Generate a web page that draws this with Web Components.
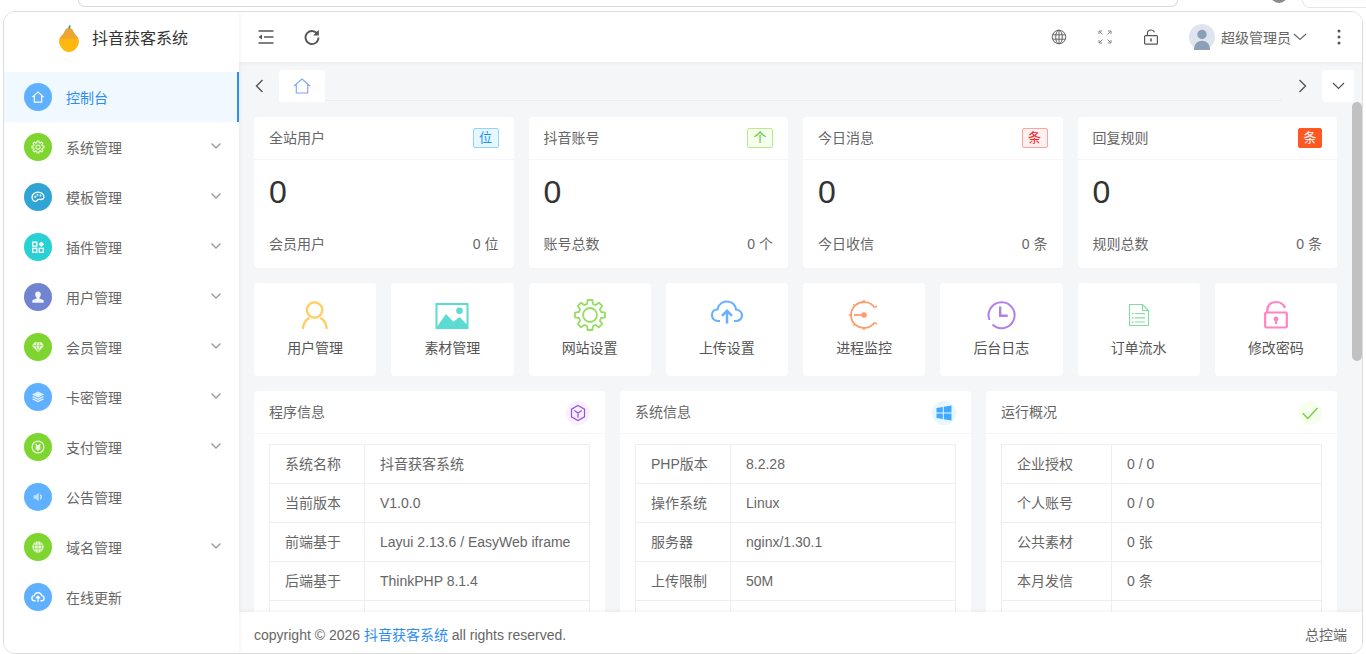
<!DOCTYPE html>
<html lang="zh-CN">
<head>
<meta charset="utf-8">
<title>抖音获客系统</title>
<style>
  html, body { margin: 0; height: 100%; overflow: hidden; background: #fff; }
  body { font: 14px "Liberation Sans", "Noto Sans CJK SC", sans-serif; color: #666; }
</style>
</head>
<body>
<app-shell>
  <side-menu slot="side">
    <menu-item icon="home" tint="#5fb1ff" active>控制台</menu-item>
    <menu-item icon="gear" tint="#7ed52f" more>系统管理</menu-item>
    <menu-item icon="palette" tint="#31a4d6" more>模板管理</menu-item>
    <menu-item icon="apps" tint="#29d0d4" more>插件管理</menu-item>
    <menu-item icon="person" tint="#7084d2" more>用户管理</menu-item>
    <menu-item icon="gem" tint="#7ed52f" more>会员管理</menu-item>
    <menu-item icon="layers" tint="#5fb1ff" more>卡密管理</menu-item>
    <menu-item icon="yen" tint="#7ed52f" more>支付管理</menu-item>
    <menu-item icon="speaker" tint="#5fb1ff">公告管理</menu-item>
    <menu-item icon="globefill" tint="#7ed52f" more>域名管理</menu-item>
    <menu-item icon="cloudsmall" tint="#5fb1ff">在线更新</menu-item>
  </side-menu>
  <top-bar slot="top"></top-bar>
  <tab-bar slot="tabs"></tab-bar>
  <dash-content slot="content">
    <stat-card slot="stats" title="全站用户" tag="位" kind="blue" sub="会员用户" total="0 位"></stat-card>
    <stat-card slot="stats" title="抖音账号" tag="个" kind="green" sub="账号总数" total="0 个"></stat-card>
    <stat-card slot="stats" title="今日消息" tag="条" kind="red" sub="今日收信" total="0 条"></stat-card>
    <stat-card slot="stats" title="回复规则" tag="条" kind="orange" sub="规则总数" total="0 条"></stat-card>

    <quick-tile slot="tiles" icon="q-user">用户管理</quick-tile>
    <quick-tile slot="tiles" icon="q-image">素材管理</quick-tile>
    <quick-tile slot="tiles" icon="q-gear">网站设置</quick-tile>
    <quick-tile slot="tiles" icon="q-cloud">上传设置</quick-tile>
    <quick-tile slot="tiles" icon="q-process">进程监控</quick-tile>
    <quick-tile slot="tiles" icon="q-clock">后台日志</quick-tile>
    <quick-tile slot="tiles" icon="q-doc">订单流水</quick-tile>
    <quick-tile slot="tiles" icon="q-lock">修改密码</quick-tile>

    <info-panel slot="panels" title="程序信息" icon="p-cube" tint="#f9f0ff" col="95px">
      <info-row label="系统名称">抖音获客系统</info-row>
      <info-row label="当前版本">V1.0.0</info-row>
      <info-row label="前端基于">Layui 2.13.6 / EasyWeb iframe</info-row>
      <info-row label="后端基于">ThinkPHP 8.1.4</info-row>
      <info-row label="">&nbsp;</info-row>
    </info-panel>
    <info-panel slot="panels" title="系统信息" icon="p-win" tint="#e6f7ff" col="95px">
      <info-row label="PHP版本">8.2.28</info-row>
      <info-row label="操作系统">Linux</info-row>
      <info-row label="服务器">nginx/1.30.1</info-row>
      <info-row label="上传限制">50M</info-row>
      <info-row label="">&nbsp;</info-row>
    </info-panel>
    <info-panel slot="panels" title="运行概况" icon="p-check" tint="#f6ffed" col="110px">
      <info-row label="企业授权">0 / 0</info-row>
      <info-row label="个人账号">0 / 0</info-row>
      <info-row label="公共素材">0 张</info-row>
      <info-row label="本月发信">0 条</info-row>
      <info-row label="">&nbsp;</info-row>
    </info-panel>
  </dash-content>
  <page-footer slot="foot"></page-footer>
</app-shell>

<script>
// gear outline, used big and small
function gearPath(cx, cy, ro, ri, teeth) {
  var d = "", step = Math.PI * 2 / teeth;
  for (var i = 0; i < teeth; i++) {
    var a = i * step - Math.PI / 2;
    var pts = [[ri, a - step * 0.34], [ro, a - step * 0.2], [ro, a + step * 0.2], [ri, a + step * 0.34]];
    pts.forEach(function (p, j) {
      var x = (cx + p[0] * Math.cos(p[1])).toFixed(2), y = (cy + p[0] * Math.sin(p[1])).toFixed(2);
      d += (i === 0 && j === 0 ? "M" : "L") + x + " " + y + " ";
    });
  }
  return d + "Z";
}

var ICONS = {
  // small white ones in the side menu
  home: [16, 16, '<path d="M1.500 8.200 8 2.400l6.500 5.800M3.800 6.800v7h8.400v-7" fill="none" stroke="#fff" stroke-width="1.300"/>'],
  gear: [16, 16, '<path d="' + gearPath(8, 8, 7, 5, 8) + '" fill="none" stroke="#fff" stroke-opacity=".85" stroke-width="1.300" stroke-linejoin="round"/><circle cx="8" cy="8" r="2.400" fill="none" stroke="#fff" stroke-opacity=".85" stroke-width="1.200"/>'],
  palette: [16, 16, '<path d="M8 2.500C4 2.500 1.200 5.200 1.200 8.400c0 2.600 2 4.600 4 4.600 1.600 0 1.600-1.400 2.600-2 1.200-.7 3 .2 4.800-.3 1.400-.4 2.200-1.400 2.200-2.700 0-3-3.200-5.500-6.800-5.500z" fill="none" stroke="#fff" stroke-width="1.500"/><circle cx="5" cy="7.800" r="1.200" fill="#fff"/><circle cx="7.400" cy="5.400" r="1.100" fill="#fff"/><circle cx="10.800" cy="6.200" r="1.100" fill="#fff"/>'],
  apps: [16, 16, '<g fill="none" stroke="#fff" stroke-width="1.500"><rect x="2" y="2.500" width="4.600" height="4.600"/><rect x="2" y="9.500" width="4.600" height="4.600"/><rect x="9.400" y="9.500" width="4.600" height="4.600"/></g><path d="M11.800 1.600 15 4.800l-3.200 3.200-3.200-3.200z" fill="#fff"/>'],
  person: [16, 16, '<path d="M8 1.800c-2 0-3.200 1.500-3.200 3.400 0 1.400.6 2.500 1.500 3.300v1.200C4.700 10.400 1.500 11 1.500 12.400V14.500h13v-2.100c0-1.400-3.200-2-4.800-2.700V8.500c.9-.8 1.500-1.900 1.500-3.300C11.200 3.300 10 1.800 8 1.800z" fill="#fff" fill-opacity=".92"/>'],
  gem: [16, 16, '<path d="M4 2.500h8l3 4-7 7.500-7-7.500z" fill="#fff" fill-opacity=".85"/><path d="M1.500 6.500h13M5.500 6.500 8 13l2.500-6.500M5.500 6.500 6.800 3M10.500 6.500 9.200 3" fill="none" stroke="#7ed52f" stroke-width=".8"/>'],
  layers: [16, 16, '<g fill="#fff" fill-opacity=".8"><path d="M8 1.800 15 5.200 8 8.600 1 5.200z"/><path d="M2.800 7 8 9.600 13.200 7 15 7.900 8 11.300 1 7.900z"/><path d="M2.800 9.800 8 12.300 13.200 9.800 15 10.700 8 14.100 1 10.700z"/></g>'],
  yen: [16, 16, '<circle cx="8" cy="8" r="6.800" fill="none" stroke="#fff" stroke-opacity=".85" stroke-width="1.400"/><path d="M5.400 4.600 8 8l2.600-3.400M5.200 8.200h5.600M5.200 10.200h5.600M8 8v4.200" fill="none" stroke="#fff" stroke-width="1.500"/>'],
  speaker: [16, 16, '<path d="M3 6h2.400l3.400-3v10L5.400 10H3z" fill="#fff" fill-opacity=".6"/><path d="M10.600 5.500c1.300 1.400 1.300 3.600 0 5" fill="none" stroke="#fff" stroke-opacity=".75" stroke-width="1.500"/>'],
  globefill: [16, 16, '<circle cx="8" cy="8" r="6.500" fill="#fff" fill-opacity=".85"/><path d="M2 6h12M2 10h12M8 1.700v12.600M5.200 2.600c-1.600 3.400-1.600 7.400 0 10.800M10.800 2.600c1.600 3.400 1.600 7.400 0 10.800" fill="none" stroke="#7ed52f" stroke-width=".7"/>'],
  cloudsmall: [16, 16, '<path d="M5.200 12.300H4.300C2.400 12.300 1 11 1 9.300 1 7.700 2.300 6.500 3.800 6.400 4.200 4.300 6 2.900 8 2.900s3.800 1.400 4.200 3.500c1.500.1 2.800 1.300 2.800 2.900 0 1.700-1.400 3-3.300 3h-.9" fill="none" stroke="#fff" stroke-width="1.500"/><path d="M8 13.800V7.400M5.600 9.600 8 7.200l2.400 2.400" fill="none" stroke="#fff" stroke-width="1.500"/>'],

  // quick tiles
  "q-user": [36, 32, '<circle cx="17.600" cy="11" r="7.700" fill="none" stroke="#ffcf66" stroke-width="2.400"/><path d="M6 29c.5-4.600 2.800-8 5.600-9.600M24 19.400c2.800 1.600 5.100 5 5.600 9.600" fill="none" stroke="#ffcf66" stroke-width="2.400" stroke-linecap="round"/>'],
  "q-image": [36, 32, '<rect x="2.500" y="5" width="31" height="24" fill="#fff" stroke="#5cdbd3" stroke-width="2"/><path d="M2.500 28.500 12 15l7.500 7.700 6-4.700 8 8V30h-31z" fill="#5cdbd3"/><circle cx="25.500" cy="11.700" r="3.300" fill="#5cdbd3"/>'],
  "q-gear": [36, 32, '<path d="' + gearPath(18, 16, 15.200, 11.400, 8) + '" fill="none" stroke="#95de64" stroke-width="1.800" stroke-linejoin="round"/><circle cx="18" cy="16" r="7" fill="none" stroke="#95de64" stroke-width="1.800"/>'],
  "q-cloud": [36, 32, '<path d="M11 22H9c-4 0-6-3-6-6s2-5.500 5.500-5.500C9.500 5.500 13.500 2.500 18 2.500c5 0 8.500 3.500 9 8 3.500.5 6 3 6 6s-2.500 5.500-6 5.500h-2" fill="none" stroke="#69b1ff" stroke-width="2.200"/><path d="M18 24.500V12M13 16.800l5-5 5 5" fill="none" stroke="#69b1ff" stroke-width="2.500"/>'],
  "q-process": [36, 32, '<g fill="none" stroke="#ff9c6e"><path d="M28.600 8.500A13 13 0 1 0 28.600 23.500" stroke-width="1.800"/><path d="M28.600 8.500 31 6.800M28.600 23.500 31 25.200M18 3V.8M18 29v2.200M8.800 6.800 7.300 5.300M8.800 25.200 7.300 26.700M5 16H2.800" stroke-width="1.500"/><path d="M8 16h9" stroke-width="1.800"/></g><circle cx="18" cy="16" r="2.800" fill="#ff9c6e"/>'],
  "q-clock": [36, 32, '<path d="M9.500 25.500A13 13 0 1 0 6.500 21" fill="none" stroke="#b37feb" stroke-width="2"/><path d="M17.200 7.500v9.300h7.500" fill="none" stroke="#b37feb" stroke-width="2.400"/>'],
  "q-doc": [36, 32, '<g fill="none" stroke="#86dba4" stroke-width="1.200"><path d="M8.500 5.500h13l6 6v15h-19z"/><path d="M21.500 5.500v6h6"/><path d="M14 14.500h10M14 18.800h10M14 23h10"/></g><g fill="#86dba4"><rect x="11" y="13.800" width="1.500" height="1.500"/><rect x="11" y="18" width="1.500" height="1.500"/><rect x="11" y="22.300" width="1.500" height="1.500"/></g>'],
  "q-lock": [36, 32, '<g fill="none" stroke="#ff85c0" stroke-width="2.200"><rect x="7.200" y="13.500" width="21.600" height="15" rx="1"/><path d="M9.200 13V11.500C9.200 6 13 3 18 3c4 0 7.500 2 9 6"/></g><circle cx="18" cy="20" r="2.400" fill="#ff85c0"/><path d="M17 20h2v5h-2z" fill="#ff85c0"/>'],

  // panel heads
  "p-cube": [18, 18, '<g fill="none" stroke="#9254de" stroke-width="1.200"><path d="M9 1.500 15.500 5.200v7.600L9 16.500 2.500 12.800V5.200z"/><path d="M5.300 6.500 9 9l3.700-2.500M9 9v4.700"/></g>'],
  "p-win": [18, 18, '<path d="M1.500 4 7.800 3v5.500H1.500zM8.800 2.800 16.500 1.600v6.900H8.800zM1.500 9.500h6.300V15l-6.300-1zM8.800 9.500h7.700v6.900L8.800 15.200z" fill="#40a9ff"/>'],
  "p-check": [18, 18, '<path d="M1.800 9.200 6.800 14.500 16.500 4" fill="none" stroke="#73d13d" stroke-width="1.400"/>'],

  // header
  fold: [18, 16, '<g fill="none" stroke="#555" stroke-width="1.600"><path d="M1.500 2h15M7 8h9.500M1.500 14h15"/></g><path d="M5 5.500 1.500 8 5 10.500z" fill="#555"/>'],
  refresh: [18, 18, '<path d="M14.800 6.600A6.500 6.500 0 1 0 15.500 9.500" fill="none" stroke="#555" stroke-width="1.800"/><path d="M15.800 1.800v5.600h-5.600z" fill="#555"/>'],
  globe: [16, 16, '<g fill="none" stroke="#666" stroke-width="1"><circle cx="8" cy="8" r="6.800"/><path d="M1.600 5.800h12.800M1.600 10.200h12.800M8 1.200v13.600"/><ellipse cx="8" cy="8" rx="3.300" ry="6.800"/></g>'],
  expand: [16, 16, '<g fill="none" stroke="#888" stroke-width="1"><path d="M2 5V2h3M2 2l3.500 3.500"/><path d="M14 5V2h-3M14 2l-3.500 3.500"/><path d="M2 11v3h3M2 14l3.500-3.500"/><path d="M14 11v3h-3M14 14l-3.500-3.500"/></g>'],
  unlock: [16, 16, '<g fill="none" stroke="#555" stroke-width="1.200"><rect x="1.600" y="6.600" width="12.800" height="8.600" rx="1"/><path d="M4.400 6.600V4.400C4.400 2.300 6 1 8 1c1.600 0 3 .8 3.500 2.200"/></g><path d="M7.200 9.500h1.600v3H7.200z" fill="#555"/>'],
  avatar: [26, 26, '<circle cx="13" cy="13" r="13" fill="#dfe5ee"/><circle cx="13" cy="10.500" r="4.700" fill="#8c9fb9"/><path d="M5 26c0-5.500 3-9.200 8-9.200s8 3.700 8 9.200c-2.300 0-13.700 0-16 0z" fill="#8c9fb9"/>'],
  dots: [4, 16, '<circle cx="2" cy="2" r="1.500" fill="#555"/><circle cx="2" cy="8" r="1.500" fill="#555"/><circle cx="2" cy="14" r="1.500" fill="#555"/>'],
  tabhome: [18, 16, '<defs><linearGradient id="h" x1="0" y1="0" x2="1" y2="1"><stop offset="0" stop-color="#6cb4ff"/><stop offset="1" stop-color="#9a8cf0"/></linearGradient></defs><path d="M1 8 9 1l8 7M3.300 6.400V15h11.400V6.400" fill="none" stroke="url(#h)" stroke-width="1.100"/>'],
  logo: [24, 30, '<defs><linearGradient id="p" x1="0" y1="0" x2="0" y2="1"><stop offset="0" stop-color="#e8a33d"/><stop offset=".4" stop-color="#f0a52c"/><stop offset=".5" stop-color="#ffb80e"/><stop offset="1" stop-color="#ffb80e"/></linearGradient></defs><path d="M12 4c2.800 0 4 2 5 4.500 1 2.400 5 4.500 5 9 0 2.200-1.200 5-3 7-1.800 2-4.200 3.500-7 3.500s-5.200-1.500-7-3.500c-1.800-2-3-4.800-3-7 0-4.500 4-6.600 5-9C8 6 9.200 4 12 4z" fill="url(#p)"/><path d="M12 4.500 13 1.500" stroke="#3fa46a" stroke-width="1.800"/>']
};

// one svg from the table above
class AppIcon extends HTMLElement {
  connectedCallback() {
    var ic = ICONS[this.getAttribute("name")];
    var size = this.getAttribute("size");
    this.attachShadow({ mode: "open" }).innerHTML =
      '<style>:host{display:inline-flex;flex:none}svg{display:block}</style>' +
      '<svg width="' + (size || ic[0]) + '" height="' + (size || ic[1]) + '" viewBox="0 0 ' + ic[0] + ' ' + ic[1] + '">' + ic[2] + '</svg>';
  }
}
customElements.define("app-icon", AppIcon);

var shellTpl = document.createElement("template");
shellTpl.innerHTML = `
<style>
  :host { display: flex; flex-direction: column; height: 654px; }
  .sliver { height: 11px; flex: none; display: flex; overflow: hidden; }
  .addr { width: 1100px; flex: none; height: 7px; margin-left: 78px; box-sizing: border-box; border: 1px solid #d9d9d9; border-top: 0; border-radius: 0 0 14px 14px; }
  .me { width: 18px; height: 18px; flex: none; margin: -15px 0 0 92px; border-radius: 50%; background: #8a8a8a; }
  .btn { width: 90px; flex: none; height: 8px; margin-left: 14px; box-sizing: border-box; border: 1px solid #e6e6e6; border-top: 0; border-radius: 0 0 12px 12px; }
  .frame { flex: 1; min-height: 0; width: 1360px; margin-left: 3px; box-sizing: border-box; border: 1px solid #dcdcdc; border-radius: 12px; overflow: hidden; display: flex; background: #fff; }
  .main { flex: 1; min-width: 0; display: flex; flex-direction: column; background: #f5f6f8; }
</style>
<div class="sliver"><div class="addr"></div><div class="me"></div><div class="btn"></div></div>
<div class="frame">
  <slot name="side"></slot>
  <div class="main">
    <slot name="top"></slot>
    <slot name="tabs"></slot>
    <slot name="content"></slot>
    <slot name="foot"></slot>
  </div>
</div>`;
class AppShell extends HTMLElement {
  constructor() { super(); this.attachShadow({ mode: "open" }).appendChild(shellTpl.content.cloneNode(true)); }
}
customElements.define("app-shell", AppShell);

var sideTpl = document.createElement("template");
sideTpl.innerHTML = `
<style>
  :host { display: block; width: 235px; flex: none; background: #fff; position: relative; z-index: 3; box-shadow: 1px 0 4px rgba(0,0,0,.05); }
  .brand { height: 60px; display: flex; align-items: center; padding-left: 53px; gap: 11px; box-sizing: border-box; font-size: 16px; color: #333; }
  .brand app-icon { margin-bottom: 6px; }
  .brand span { margin-bottom: 11px; }
</style>
<div class="brand"><app-icon name="logo"></app-icon><span>抖音获客系统</span></div>
<slot></slot>`;
class SideMenu extends HTMLElement {
  constructor() { super(); this.attachShadow({ mode: "open" }).appendChild(sideTpl.content.cloneNode(true)); }
}
customElements.define("side-menu", SideMenu);

class MenuItem extends HTMLElement {
  connectedCallback() {
    var act = this.hasAttribute("active");
    this.attachShadow({ mode: "open" }).innerHTML = `
<style>
  :host { display: flex; align-items: center; height: 50px; padding-left: 20px; box-sizing: border-box; color: ${act ? "#2d8cf0" : "#666"}; background: ${act ? "#f0f9ff" : "transparent"}; ${act ? "border-right: 2px solid #2d8cf0;" : ""} }
  .dot { width: 28px; height: 28px; border-radius: 50%; display: flex; align-items: center; justify-content: center; background: ${this.getAttribute("tint")}; margin-right: 14px; flex: none; }
  .txt { flex: 1; margin-top: -1px; }
  svg { margin: -3px 18px 0 0; display: block; }
</style>
<span class="dot"><app-icon name="${this.getAttribute("icon")}" size="14"></app-icon></span>
<span class="txt"><slot></slot></span>
${this.hasAttribute("more") ? '<svg width="10" height="6" viewBox="0 0 10 6"><path d="M.5.500 5 5 9.500.5" fill="none" stroke="#999" stroke-width="1.300"/></svg>' : ""}`;
  }
}
customElements.define("menu-item", MenuItem);

var topTpl = document.createElement("template");
topTpl.innerHTML = `
<style>
  :host { display: flex; align-items: center; height: 50px; flex: none; background: #fff; box-shadow: 0 1px 4px rgba(0,0,0,.06); position: relative; z-index: 2; box-sizing: border-box; padding: 0 21px 0 18px; color: #666; }
  .b { display: flex; align-items: center; }
  .fold { margin-right: 28px; }
  .sp { flex: 1; }
  .g { margin-right: 30px; }
  .user { display: flex; align-items: center; margin-right: 30px; }
  .user span { margin: 0 2px 0 6px; white-space: nowrap; }
</style>
<span class="b fold"><app-icon name="fold"></app-icon></span>
<span class="b"><app-icon name="refresh"></app-icon></span>
<span class="sp"></span>
<span class="b g"><app-icon name="globe"></app-icon></span>
<span class="b g"><app-icon name="expand"></app-icon></span>
<span class="b g"><app-icon name="unlock"></app-icon></span>
<span class="user"><app-icon name="avatar"></app-icon><span>超级管理员</span>
<svg width="14" height="8" viewBox="0 0 14 8"><path d="M1 1l6 5.500L13 1" fill="none" stroke="#666" stroke-width="1.100"/></svg></span>
<span class="b"><app-icon name="dots"></app-icon></span>`;
class TopBar extends HTMLElement {
  constructor() { super(); this.attachShadow({ mode: "open" }).appendChild(topTpl.content.cloneNode(true)); }
}
customElements.define("top-bar", TopBar);

var tabsTpl = document.createElement("template");
tabsTpl.innerHTML = `
<style>
  :host { display: flex; height: 40px; flex: none; padding: 8px 8px 0 0; box-sizing: border-box; }
  .arrow { width: 40px; flex: none; display: flex; align-items: center; justify-content: center; }
  .tab { width: 46px; background: #fff; border-radius: 4px 4px 0 0; display: flex; align-items: center; justify-content: center; flex: none; }
  .line { flex: 1; border-bottom: 1px solid #ebedf0; margin-bottom: 1px; }
  .down { width: 32px; background: #fff; border-radius: 4px; display: flex; align-items: center; justify-content: center; flex: none; }
</style>
<span class="arrow"><svg width="9" height="14" viewBox="0 0 9 14"><path d="M7.500 1 1.500 7l6 6" fill="none" stroke="#555" stroke-width="1.400"/></svg></span>
<span class="tab"><app-icon name="tabhome"></app-icon></span>
<span class="line"></span>
<span class="arrow"><svg width="9" height="14" viewBox="0 0 9 14"><path d="M1.500 1l6 6-6 6" fill="none" stroke="#555" stroke-width="1.400"/></svg></span>
<span class="down"><svg width="13" height="8" viewBox="0 0 13 8"><path d="M1 1l5.500 5.500L12 1" fill="none" stroke="#555" stroke-width="1.200"/></svg></span>`;
class TabBar extends HTMLElement {
  constructor() { super(); this.attachShadow({ mode: "open" }).appendChild(tabsTpl.content.cloneNode(true)); }
}
customElements.define("tab-bar", TabBar);

var contentTpl = document.createElement("template");
contentTpl.innerHTML = `
<style>
  :host { display: block; flex: 1; min-height: 0; position: relative; overflow: hidden; padding: 15px 25px 0 15px; box-sizing: border-box; }
  .stats { display: grid; grid-template-columns: repeat(4, 1fr); gap: 15px; }
  .tiles { display: grid; grid-template-columns: repeat(8, 1fr); gap: 15px; margin-top: 15px; }
  .panels { display: grid; grid-template-columns: repeat(3, 1fr); gap: 15px; margin-top: 15px; }
  .thumb { position: absolute; right: 0; top: 0; width: 10px; height: 259px; background: #c1c1c1; border-radius: 5px; }
</style>
<div class="stats"><slot name="stats"></slot></div>
<div class="tiles"><slot name="tiles"></slot></div>
<div class="panels"><slot name="panels"></slot></div>
<div class="thumb"></div>`;
class DashContent extends HTMLElement {
  constructor() { super(); this.attachShadow({ mode: "open" }).appendChild(contentTpl.content.cloneNode(true)); }
}
customElements.define("dash-content", DashContent);

var TAGS = {
  blue: "width:26px;color:#1890ff;background:#e6f7ff;border:1px solid #91d5ff;",
  green: "width:26px;color:#52c41a;background:#f6ffed;border:1px solid #b7eb8f;",
  red: "width:26px;color:#f5222d;background:#fff1f0;border:1px solid #ffa39e;",
  orange: "width:24px;color:#fff;background:#ff5722;border:1px solid #ff5722;"
};
class StatCard extends HTMLElement {
  connectedCallback() {
    var a = this.getAttribute.bind(this);
    this.attachShadow({ mode: "open" }).innerHTML = `
<style>
  :host { display: block; background: #fff; border-radius: 4px; height: 151px; box-sizing: border-box; }
  .head { height: 43px; display: flex; align-items: center; justify-content: space-between; padding: 0 15px; border-bottom: 1px solid #f6f6f6; box-sizing: border-box; }
  .lab { margin-top: -2px; }
  .tag { height: 20px; box-sizing: border-box; border-radius: 2px; font-size: 13px; line-height: 18px; text-align: center; ${TAGS[a("kind")]} }
  .num { font-size: 32px; line-height: 36px; color: #333; padding: 14px 15px 0; height: 50px; box-sizing: content-box; }
  .foot { display: flex; justify-content: space-between; padding: 10px 15px 0; line-height: 20px; }
</style>
<div class="head"><span class="lab">${a("title")}</span><span class="tag">${a("tag")}</span></div>
<div class="num">0</div>
<div class="foot"><span>${a("sub")}</span><span>${a("total")}</span></div>`;
  }
}
customElements.define("stat-card", StatCard);

class QuickTile extends HTMLElement {
  connectedCallback() {
    this.attachShadow({ mode: "open" }).innerHTML = `
<style>
  :host { display: flex; flex-direction: column; align-items: center; background: #fff; border-radius: 4px; height: 93px; padding-top: 16px; box-sizing: border-box; }
  .t { margin-top: 7px; line-height: 20px; color: #555; }
</style>
<app-icon name="${this.getAttribute("icon")}"></app-icon>
<div class="t"><slot></slot></div>`;
  }
}
customElements.define("quick-tile", QuickTile);

class InfoPanel extends HTMLElement {
  connectedCallback() {
    var a = this.getAttribute.bind(this);
    this.attachShadow({ mode: "open" }).innerHTML = `
<style>
  :host { display: block; background: #fff; border-radius: 4px; --col: ${a("col")}; }
  .head { height: 43px; display: flex; align-items: center; justify-content: space-between; padding: 0 15px; border-bottom: 1px solid #f6f6f6; box-sizing: border-box; margin-bottom: 10px; }
  .lab { margin-top: -2px; }
  .ic { width: 24px; height: 24px; border-radius: 50%; background: ${a("tint")}; display: flex; align-items: center; justify-content: center; margin-top: 2px; }
  .tb { margin: 0 15px 15px; border: 1px solid #eee; border-bottom: 0; }
</style>
<div class="head"><span class="lab">${a("title")}</span><span class="ic"><app-icon name="${a("icon")}"></app-icon></span></div>
<div class="tb"><slot></slot></div>`;
  }
}
customElements.define("info-panel", InfoPanel);

class InfoRow extends HTMLElement {
  connectedCallback() {
    this.attachShadow({ mode: "open" }).innerHTML = `
<style>
  :host { display: grid; grid-template-columns: var(--col) 1fr; height: 39px; box-sizing: border-box; border-bottom: 1px solid #eee; line-height: 38px; }
  .l { padding-left: 15px; border-right: 1px solid #eee; }
  .v { padding-left: 15px; }
</style>
<div class="l">${this.getAttribute("label")}</div>
<div class="v"><slot></slot></div>`;
  }
}
customElements.define("info-row", InfoRow);

var footTpl = document.createElement("template");
footTpl.innerHTML = `
<style>
  :host { display: flex; align-items: center; justify-content: space-between; height: 41px; flex: none; background: #fff; padding: 2px 15px 0; box-sizing: border-box; box-shadow: 0 -1px 4px rgba(0,0,0,.06); position: relative; z-index: 2; color: #666; }
  a { color: #2d8cf0; text-decoration: none; }
</style>
<span>copyright © 2026 <a href="#">抖音获客系统</a> all rights reserved.</span>
<span>总控端</span>`;
class PageFooter extends HTMLElement {
  constructor() { super(); this.attachShadow({ mode: "open" }).appendChild(footTpl.content.cloneNode(true)); }
}
customElements.define("page-footer", PageFooter);
</script>
</body>
</html>
